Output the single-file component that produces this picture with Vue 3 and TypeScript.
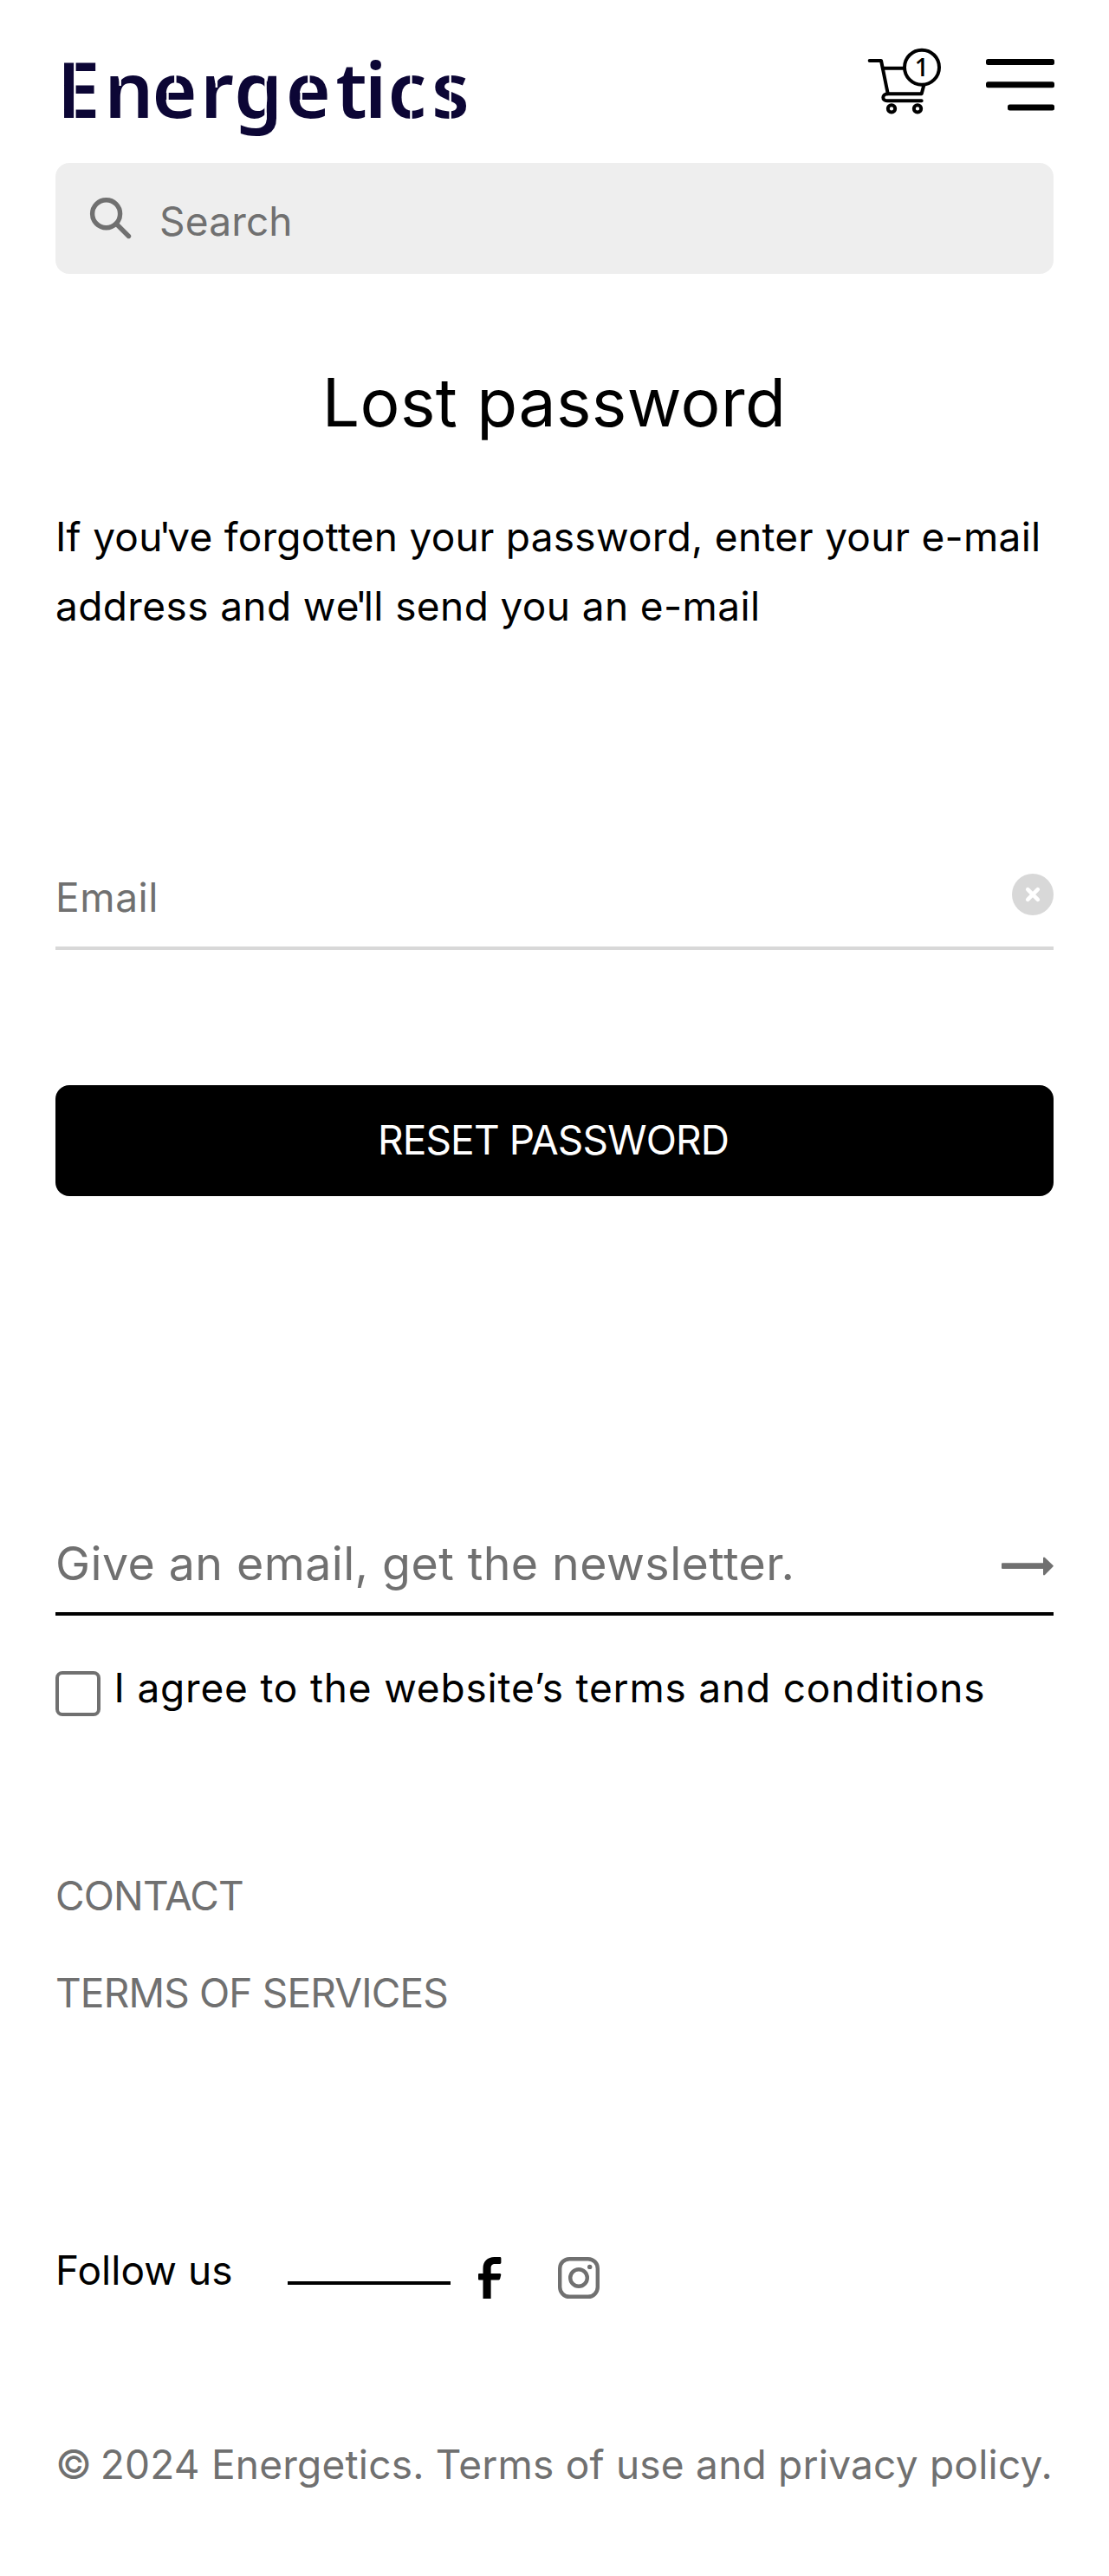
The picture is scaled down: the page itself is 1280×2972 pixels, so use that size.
<script setup lang="ts">
interface Cut {
  x: number
  y: number
  h: number
}

// Stencil bridges cut through the logo letters
const cuts: Cut[] = [
  { x: 21.1, y: 14, h: 68 },
  { x: 73.4, y: 28, h: 15 },
  { x: 137.1, y: 28, h: 13 },
  { x: 128.2, y: 49, h: 12 },
  { x: 184.6, y: 28, h: 17 },
  { x: 241.3, y: 28, h: 54 },
  { x: 291.1, y: 28, h: 13 },
  { x: 282.4, y: 49, h: 12 },
  { x: 409.2, y: 28, h: 54 },
  { x: 454.4, y: 28, h: 54 },
]

const links: string[] = ['CONTACT', 'TERMS OF SERVICES']
</script>

<template>
  <div class="page">
    <header class="header">
      <svg class="logo" width="490" height="132" viewBox="0 -24 490 132">
        <text x="1.7 56.5 111.5 167.2 206.2 265.7 323.4 356.9 383.4 434" y="80">Energetics</text>
        <rect v-for="c in cuts" :key="c.x" :x="c.x" :y="c.y" :height="c.h" width="2.5" />
      </svg>
      <div class="actions">
        <svg class="cart" width="90" height="80" viewBox="120 40 270 240">
          <g class="cart-lines">
            <path d="M131 91H171L194 204" />
            <path d="M177 117H250M319 176L311 206H194" />
            <path d="M194 206C173 206 173 230 192 230H311" />
            <circle cx="207" cy="257" r="12.5" />
            <circle cx="297" cy="257" r="12.5" />
            <circle class="badge" cx="312" cy="114" r="60" />
          </g>
          <text x="311" y="144" text-anchor="middle">1</text>
        </svg>
        <svg class="menu" width="79" height="60" viewBox="0 0 79 60">
          <rect width="79" height="7" rx="2.5" />
          <rect y="26.2" width="79" height="7" rx="2.5" />
          <rect x="25" y="52.4" width="54" height="7" rx="2.5" />
        </svg>
      </div>
    </header>

    <div class="search">
      <svg class="search-icon" width="50" height="52" viewBox="0 0 50 52">
        <circle cx="20.6" cy="20.7" r="16" />
        <path d="M32.5 32.5L46.5 46.5" />
      </svg>
      <span class="search-text">Search</span>
    </div>

    <main>
      <h1 class="title">Lost password</h1>
      <p class="intro">
        <span class="line one">If yo<span class="tight">u'</span>ve forgotten your password, enter your e-mail</span>
        <span class="line two">address and w<span class="tight">e'</span>ll send you an e-mail</span>
      </p>
      <div class="field">
        <span class="email">Email</span>
        <svg class="clear" width="48" height="48" viewBox="0 0 48 48">
          <circle cx="24" cy="24" r="24" />
          <path d="M18.2 18.2L29.8 29.8M29.8 18.2L18.2 29.8" />
        </svg>
      </div>
      <button class="reset" type="button">RESET PASSWORD</button>
    </main>

    <footer>
      <div class="newsletter">
        <span>Give an email, get the newsletter.</span>
        <svg class="arrow" width="60" height="22" viewBox="0 0 60 22">
          <path d="M1 7.3H48V1.5Q48.6 0 50 1L59.4 10Q60.2 10.7 59.4 11.4L50 21Q48.6 22 48 20.5V14H1Q0 14 0 13V8.3Q0 7.3 1 7.3Z" />
        </svg>
      </div>
      <div class="agree">
        <span class="checkbox"></span>
        <span class="agree-text">I agree to the website’s terms and conditions</span>
      </div>
      <nav class="links">
        <span v-for="l in links" :key="l">{{ l }}</span>
      </nav>
      <div class="follow">
        <span class="follow-text">Follow us</span>
        <span class="rule"></span>
        <svg class="facebook" width="27" height="48" viewBox="0 0 27 48">
          <path d="M5.5 48V26.4H1Q0 26.4 0 25.4V20Q0 19 1 19H5.5V13C5.5 4.8 10.8 0 18.5 0H25Q26.4 0 26.4 1.4V6.6Q26.4 8 25 8H19.5C16 8 14.6 9.8 14.6 13V19H24.8Q26.6 19 26.3 20.6L25.2 25Q24.9 26.4 23.5 26.4H14.6V48Z" />
        </svg>
        <svg class="instagram" width="48" height="48" viewBox="0 0 48 48">
          <rect x="2.2" y="2.2" width="43.6" height="43.6" rx="11" />
          <circle cx="24" cy="24" r="9.8" />
          <circle class="dot" cx="36.7" cy="11.4" r="2.7" />
        </svg>
      </div>
      <p class="copy"><span class="mark">©</span> 2024 Energetics. Terms of use and privacy policy.</p>
    </footer>
  </div>
</template>

<style>
body {
  margin: 0;
  background: #fff;
}
</style>

<style scoped>
.page {
  box-sizing: border-box;
  width: 1280px;
  height: 2972px;
  padding: 0 64px;
  background: #fff;
  color: #000;
  font-family: Inter, sans-serif;
  font-size: 46px;
  white-space: nowrap;
}
.header {
  display: flex;
  justify-content: space-between;
  align-items: flex-start;
  height: 188px;
}
.logo {
  margin-top: 32px;
  overflow: visible;
}
.logo text {
  font: 600 89px 'Noto Sans', sans-serif;
  fill: #0c0635;
}
.logo rect {
  fill: #fff;
}
.actions {
  display: flex;
  align-items: flex-start;
  gap: 48px;
  margin-right: -1px;
}
.cart {
  margin-top: 53px;
}
.cart-lines {
  fill: none;
  stroke: #000;
  stroke-width: 12;
  stroke-linecap: round;
  stroke-linejoin: round;
}
.cart-lines .badge {
  fill: #fff;
}
.cart text {
  font: 600 84px 'Open Sans', sans-serif;
}
.menu {
  margin-top: 68px;
}
.search {
  box-sizing: border-box;
  display: flex;
  align-items: flex-start;
  height: 128px;
  padding-left: 38px;
  border-radius: 16px;
  background: #eee;
  color: #707070;
}
.search-icon {
  margin-top: 38px;
  fill: none;
  stroke: #707070;
  stroke-width: 5.4;
  stroke-linecap: round;
}
.search-text {
  margin: 3px 0 0 32px;
  line-height: 128px;
  letter-spacing: 0.18px;
}
.title {
  margin: 98px 0 0;
  padding-right: 1px;
  font-size: 76.7px;
  font-weight: 400;
  line-height: 100px;
  letter-spacing: 0.42px;
  text-align: center;
}
.intro {
  margin: 65px 0 0;
  line-height: 80px;
}
.line {
  display: block;
}
.one {
  letter-spacing: 0.27px;
}
.two {
  letter-spacing: 0.39px;
}
.line .tight {
  letter-spacing: -4px;
}
.field {
  display: flex;
  justify-content: space-between;
  height: 112px;
  margin-top: 241px;
  border-bottom: 4px solid #d8d8d8;
  color: #707070;
}
.email {
  line-height: 110px;
  letter-spacing: 0.6px;
}
.clear {
  margin-top: 28px;
}
.clear circle {
  fill: #d8d8d8;
}
.clear path {
  stroke: #fff;
  stroke-width: 4.6;
  stroke-linecap: round;
}
.reset {
  display: block;
  width: 100%;
  height: 128px;
  margin-top: 156px;
  padding: 0 3px 2px 0;
  border: 0;
  border-radius: 16px;
  background: #000;
  color: #fff;
  font: inherit;
  letter-spacing: -0.85px;
}
.newsletter {
  display: flex;
  justify-content: space-between;
  height: 112px;
  margin-top: 368px;
  border-bottom: 4px solid #000;
  color: #707070;
  font-size: 53.7px;
  line-height: 112px;
  letter-spacing: 0.43px;
}
.arrow {
  margin-top: 48px;
  fill: #707070;
}
.agree {
  display: flex;
  gap: 15.5px;
  height: 64px;
  margin-top: 52px;
}
.checkbox {
  box-sizing: border-box;
  width: 52px;
  height: 52px;
  margin-top: 12px;
  border: 4px solid #707070;
  border-radius: 8px;
}
.agree-text {
  line-height: 62px;
  letter-spacing: 0.81px;
}
.links {
  display: flex;
  flex-direction: column;
  gap: 32px;
  margin-top: 167px;
  color: #707070;
  line-height: 80px;
  letter-spacing: -0.83px;
}
.follow {
  display: flex;
  align-items: flex-start;
  height: 80px;
  margin-top: 240px;
}
.follow-text {
  width: 268px;
  line-height: 80px;
  letter-spacing: 0.08px;
}
.rule {
  width: 188px;
  height: 4px;
  margin-top: 53px;
  background: #000;
}
.facebook {
  margin: 25px 0 0 32px;
}
.instagram {
  margin: 25px 0 0 65px;
  fill: none;
  stroke: #707070;
  stroke-width: 4.4;
}
.instagram .dot {
  fill: #707070;
  stroke: none;
}
.copy {
  margin: 144px 0 0;
  color: #707070;
  line-height: 80px;
  letter-spacing: 0.23px;
}
.mark {
  letter-spacing: -3.5px;
}
</style>
